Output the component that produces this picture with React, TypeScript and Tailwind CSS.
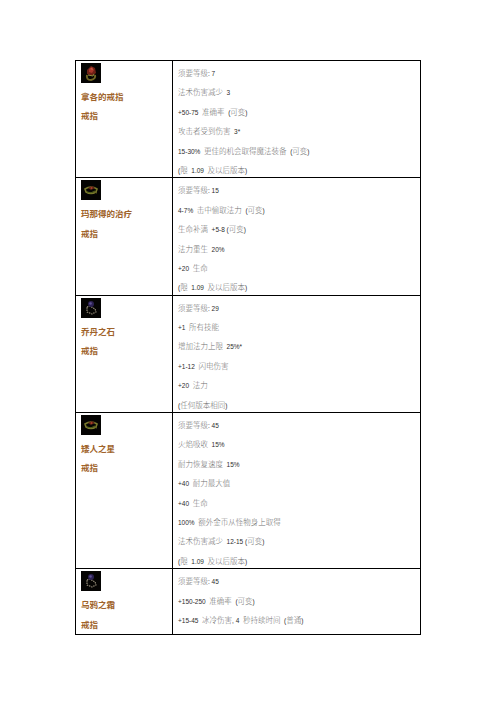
import React from "react";

interface Ring {
  name: string;
  icon: "red" | "gold" | "purple";
  stats: string[];
}

const rings: Ring[] = [
  {
    name: "拿各的戒指",
    icon: "red",
    stats: [
      "须要等级: 7",
      "法术伤害减少  3",
      "+50-75  准确率  (可变)",
      "攻击者受到伤害  3*",
      "15-30%  更佳的机会取得魔法装备  (可变)",
      "(限  1.09  及以后版本)",
    ],
  },
  {
    name: "玛那得的治疗",
    icon: "gold",
    stats: [
      "须要等级: 15",
      "4-7%  击中偷取法力  (可变)",
      "生命补满  +5-8 (可变)",
      "法力重生  20%",
      "+20  生命",
      "(限  1.09  及以后版本)",
    ],
  },
  {
    name: "乔丹之石",
    icon: "purple",
    stats: [
      "须要等级: 29",
      "+1  所有技能",
      "增加法力上限  25%*",
      "+1-12  闪电伤害",
      "+20  法力",
      "(任何版本相同)",
    ],
  },
  {
    name: "矮人之星",
    icon: "gold",
    stats: [
      "须要等级: 45",
      "火焰吸收  15%",
      "耐力恢复速度  15%",
      "+40  耐力最大值",
      "+40  生命",
      "100%  额外金币从怪物身上取得",
      "法术伤害减少  12-15 (可变)",
      "(限  1.09  及以后版本)",
    ],
  },
  {
    name: "乌鸦之霜",
    icon: "purple",
    stats: [
      "须要等级: 45",
      "+150-250  准确率  (可变)",
      "+15-45  冰冷伤害, 4  秒持续时间  (普通)",
    ],
  },
];

function RingIcon({ kind }: { kind: Ring["icon"] }) {
  return (
    <svg width="20" height="20" viewBox="0 0 20 20" className="block">
      <rect width="20" height="20" fill="#050403" />
      {kind === "red" && (
        <>
          <path d="M6 12 Q5 17 10 17 Q15 16 14 12" fill="none" stroke="#6e6424" strokeWidth="2" />
          <path d="M6 7 L10 3 L14 5 L15 10 L11 13 L6 11 Z" fill="#6e2016" />
          <path d="M8 6 L11 4 L13 7 L11 10 L8 9 Z" fill="#a8362a" />
          <path d="M9 6 L11 5 L12 7 Z" fill="#c9644a" />
          <path d="M7 12 L12 13 L13 11" fill="none" stroke="#8f8a3a" strokeWidth="1" />
        </>
      )}
      {kind === "gold" && (
        <>
          <path d="M4 9 Q10 5 16 9 L15 12 Q10 15 5 12 Z" fill="none" stroke="#7a7a2c" strokeWidth="1.6" />
          <path d="M6 12 Q10 14 14 11" fill="none" stroke="#4f5e1a" strokeWidth="1" />
          <path d="M7 8 L11 6 L14 8 L10 10 Z" fill="#5e2014" />
          <circle cx="10.5" cy="8" r="1" fill="#a8402a" />
          <path d="M13 12 L16 13" stroke="#6a6a22" strokeWidth="1" />
        </>
      )}
      {kind === "purple" && (
        <>
          <path
            d="M6 9 L9 8 L14 11 L15 14 L11 16 L6 14 Z"
            fill="none"
            stroke="#a89e88"
            strokeWidth="1.1"
            strokeDasharray="1.4 0.9"
          />
          <circle cx="10" cy="6" r="3" fill="#2c2052" />
          <circle cx="9.5" cy="5.5" r="1.3" fill="#5e5094" />
        </>
      )}
    </svg>
  );
}

const cjk = /[\u3000-\u9fff\uff00-\uffef]/;

// split a line into CJK runs and latin/number runs
function StatLine({ text }: { text: string }) {
  const parts = text.split(/([\u3000-\u9fff\uff00-\uffef]+)/).filter((p) => p !== "");
  return (
    <div className="h-[19.4px] leading-[19.4px] whitespace-pre">
      {parts.map((p, i) =>
        cjk.test(p) ? (
          <span key={i} className="text-[7.5px] text-[#707070] font-['Noto_Sans_CJK_SC',sans-serif] font-light">
            {p}
          </span>
        ) : (
          <span key={i} className="text-[6.5px] text-[#2e2e2e] font-['Liberation_Sans',Arial,sans-serif]">
            {p}
          </span>
        )
      )}
    </div>
  );
}

export default function App() {
  return (
    <div className="w-[496px] h-[702px] bg-white pt-[60px] pl-[75px]">
      <div className="w-[346px] border border-black">
        {rings.map((ring, idx) => (
          <div key={idx} className={`flex ${idx > 0 ? "border-t border-black" : ""}`}>
            {/* Name column */}
            <div className="w-[97px] shrink-0 border-r border-black pl-[5px] pt-[2px]">
              <RingIcon kind={ring.icon} />
              <div className="mt-[4px] font-['Noto_Sans_CJK_SC',sans-serif] font-bold text-[8.5px] text-[#a0632a]">
                <div className="h-[19.4px] leading-[19.4px]">{ring.name}</div>
                <div className="h-[19.4px] leading-[19.4px]">戒指</div>
              </div>
            </div>
            {/* Stats column */}
            <div className="flex-1 pl-[5px]">
              {ring.stats.map((s, i) => (
                <StatLine key={i} text={s} />
              ))}
            </div>
          </div>
        ))}
      </div>
    </div>
  );
}
